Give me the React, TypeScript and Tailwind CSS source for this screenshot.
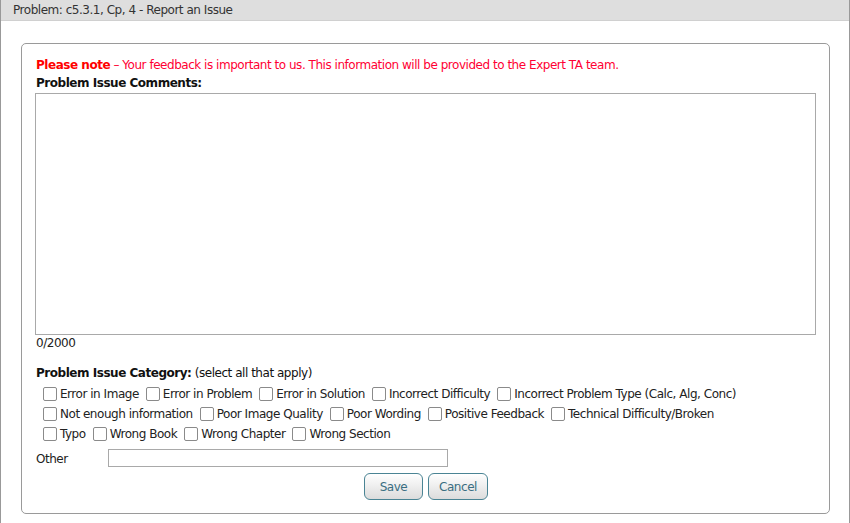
const row1 = ['Error in Image', 'Error in Problem', 'Error in Solution', 'Incorrect Difficulty', 'Incorrect Problem Type (Calc, Alg, Conc)']
const row2 = ['Not enough information', 'Poor Image Quality', 'Poor Wording', 'Positive Feedback', 'Technical Difficulty/Broken']
const row3 = ['Typo', 'Wrong Book', 'Wrong Chapter', 'Wrong Section']

const CheckRow = ({ items }: { items: string[] }) => (
  <div className="flex items-center h-5 pl-[7px] gap-[7px]">
    {items.map((label) => (
      <label key={label} className="flex items-center gap-[3px] text-[#222]">
        <input
          type="checkbox"
          className="appearance-none m-0 w-[14px] h-[14px] border border-[#8a8a8a] rounded-[2px] bg-white"
        />
        <span>{label}</span>
      </label>
    ))}
  </div>
)

const App = () => {
  return (
    <div
      className="w-[850px] h-[523px] bg-white border-x border-[#999] text-[12px] leading-[14px] tracking-[-0.47px] flex flex-col"
      style={{ fontFamily: 'Tahoma, "DejaVu Sans", Verdana, sans-serif' }}
    >
      <div className="h-[21px] bg-[#dedede] flex items-center pl-[12px] text-[#333] border-b border-[#d0d0d0]">
        Problem: c5.3.1, Cp, 4 - Report an Issue
      </div>
      <div className="flex-1 px-[20px] pt-[22px] pb-[9px] flex">
        <div className="flex-1 border border-[#9a9a9a] rounded-[5px] pl-[14px] pr-[13px] pt-[14px] flex flex-col">
          <div className="text-[#ff0033] h-[14px]">
            <span className="font-bold text-[#ff0000]">Please note</span> – Your feedback is important to us. This information will be provided to the Expert TA team.
          </div>
          <div className="font-bold text-[#111] mt-[4px] h-[14px]">Problem Issue Comments:</div>
          <textarea className="mt-[3px] -ml-[1px] h-[242px] w-[781px] border border-[#a9a9a9] resize-none outline-none" />
          <div className="mt-[1px] text-[#222] h-[14px]">0/2000</div>
          <div className="mt-[16px] text-[#111] h-[14px]">
            <span className="font-bold">Problem Issue Category:</span> (select all that apply)
          </div>
          <div className="mt-[4px] flex flex-col">
            <CheckRow items={row1} />
            <CheckRow items={row2} />
            <CheckRow items={row3} />
          </div>
          <div className="mt-[5px] flex items-center h-[18px]">
            <span className="w-[72px] text-[#222] translate-y-[1px]">Other</span>
            <input className="w-[340px] h-[18px] border border-[#a9a9a9] outline-none" />
          </div>
          <div className="mt-[6px] flex justify-center gap-[5px]">
            <button className="w-[59px] h-[27px] rounded-[6px] border border-[#4a8494] bg-gradient-to-b from-white to-[#dcdcdc] text-[#3a6e82]">
              Save
            </button>
            <button className="w-[60px] h-[27px] rounded-[6px] border border-[#4a8494] bg-gradient-to-b from-white to-[#dcdcdc] text-[#3a6e82]">
              Cancel
            </button>
          </div>
        </div>
      </div>
    </div>
  )
}

export default App
